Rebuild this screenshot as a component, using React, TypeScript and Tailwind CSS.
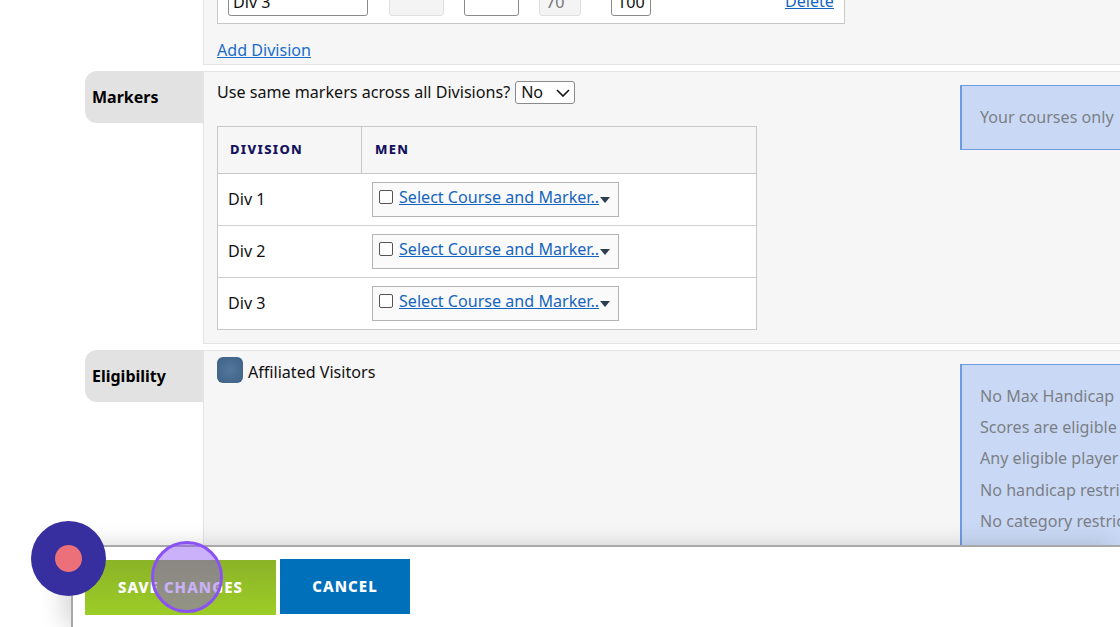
import React from 'react';

const divisions = ['Div 1', 'Div 2', 'Div 3'];
const eligibilityNotes = [
  'No Max Handicap',
  'Scores are eligible',
  'Any eligible player',
  'No handicap restrictions',
  'No category restrictions',
];

const SectionLabel: React.FC<{ title: string }> = ({ title }) => (
  <div className="w-[118px] h-[52px] shrink-0 bg-[#e2e2e2] rounded-l-xl pl-[7px] flex items-center text-[16px] font-bold text-black">
    {title}
  </div>
);

const MarkerPicker: React.FC = () => (
  <div className="w-[247px] h-[35px] border border-[#b4b4b4] bg-[#fafafa] flex items-start pl-[6px] pt-[4px]">
    <span className="w-[14px] h-[14px] mt-[3px] border border-[#555] rounded-[2px] bg-white shrink-0" />
    <a href="#" className="ml-[6px] text-[16.1px] leading-[20px] text-[#1565c0] underline whitespace-nowrap">
      Select Course and Marker..
    </a>
    <span className="mt-[10px] ml-[1px] w-0 h-0 border-x-[5px] border-x-transparent border-t-[6px] border-t-[#2c3e50]" />
  </div>
);

const App: React.FC = () => {
  return (
    <div className="relative w-[1120px] h-[627px] overflow-hidden bg-white font-['Noto_Sans',sans-serif] text-[16.1px] text-[#111]">
      <div className="-mt-[40px] pl-[85px]">
        {/* divisions */}
        <div className="ml-[118px] h-[105px] bg-[#f6f6f6] border-l border-b border-[#e4e4e4] pl-[13px]">
          <div className="w-[628px] h-[64px] bg-white border border-t-0 border-[#c8c8c8] flex items-start pl-[10px] pt-[28px]">
            <div className="w-[140px] h-[28px] border border-[#8a8a8a] rounded-[3px] bg-white pl-[4px] leading-[27px]">Div 3</div>
            <div className="ml-[21px] w-[55px] h-[28px] border border-[#e0e0e0] rounded-[3px] bg-[#f4f4f4]" />
            <div className="ml-[20px] w-[55px] h-[28px] border border-[#8a8a8a] rounded-[3px] bg-white" />
            <div className="ml-[20px] w-[42px] h-[28px] border border-[#e0e0e0] rounded-[3px] bg-[#f4f4f4] pl-[6px] leading-[27px] text-[#777]">70</div>
            <div className="ml-[30px] w-[40px] h-[28px] border border-[#8a8a8a] rounded-[3px] bg-white pl-[5px] leading-[27px]">100</div>
            <a href="#" className="ml-[134px] leading-[27px] text-[#1565c0] underline">Delete</a>
          </div>
          <a href="#" className="block mt-[14px] leading-[24px] text-[#1a6ccb] underline w-fit">Add Division</a>
        </div>

        {/* markers */}
        <div className="flex mt-[6px]">
          <SectionLabel title="Markers" />
          <div className="flex-1 h-[273px] bg-[#f6f6f6] border-l border-t border-b border-[#e4e4e4] pl-[13px] flex justify-between">
            <div className="w-[540px]">
              <div className="flex items-center mt-[9px] h-[23px] whitespace-nowrap">
                <span>Use same markers across all Divisions?</span>
                <span className="ml-[5px] w-[60px] h-[23px] border border-[#8a8a8a] rounded-[3px] bg-white pl-[5px] flex items-center justify-between pr-[4px]">
                  No
                  <svg width="14" height="8" viewBox="0 0 14 8" fill="none" stroke="#111" strokeWidth="1.6">
                    <path d="M1 1l6 6 6-6" />
                  </svg>
                </span>
              </div>
              <div className="mt-[22px] border border-[#c8c8c8] bg-white w-[540px]">
                <div className="flex h-[47px] bg-[#f6f6f6] border-b border-[#c8c8c8] text-[13px] font-extrabold tracking-[0.1em] text-[#14125e]">
                  <div className="w-[144px] border-r border-[#c8c8c8] pl-[12px] flex items-center">DIVISION</div>
                  <div className="pl-[13px] flex items-center">MEN</div>
                </div>
                {divisions.map((name, i) => (
                  <div key={name} className={`flex ${i < 2 ? 'h-[52px] border-b border-[#d0d0d0]' : 'h-[51px]'}`}>
                    <div className="w-[144px] pl-[10px] pt-[13px] leading-[24px]">{name}</div>
                    <div className="pl-[10px] pt-[8px]">
                      <MarkerPicker />
                    </div>
                  </div>
                ))}
              </div>
            </div>
            <div className="w-[160px] h-[65px] mt-[13px] bg-[#c9d9f5] border border-l-2 border-r-0 border-[#6f9be0] pl-[18px] pt-[19px] leading-[24px] text-[#7b7f85] whitespace-nowrap overflow-hidden">
              Your courses only
            </div>
          </div>
        </div>

        {/* eligibility */}
        <div className="flex mt-[6px]">
          <SectionLabel title="Eligibility" />
          <div className="flex-1 h-[300px] bg-[#f6f6f6] border-l border-t border-[#e4e4e4] pl-[13px] flex justify-between">
            <div className="flex items-start mt-[6px]">
              <span className="w-[26px] h-[26px] rounded-[6px] bg-[radial-gradient(circle,#54789c_0%,#3c5f85_100%)]" />
              <span className="ml-[5px] leading-[30px]">Affiliated Visitors</span>
            </div>
            <div className="w-[160px] h-[260px] mt-[13px] bg-[#c9d9f5] border border-l-2 border-r-0 border-[#6f9be0] pl-[18px] pt-[16px] leading-[31.2px] text-[#7b7f85] whitespace-nowrap overflow-hidden">
              {eligibilityNotes.map((note) => (
                <div key={note}>{note}</div>
              ))}
            </div>
          </div>
        </div>
      </div>

      {/* sticky save bar */}
      <div className="absolute left-[71px] right-0 top-[545px] bottom-0 bg-white border-l-2 border-t-2 border-[#a8a8a8] shadow-[-10px_-2px_20px_rgba(0,0,0,0.14)] flex items-start pl-[12px] pt-[12px] gap-[4px]">
        <button className="w-[191px] h-[55px] mt-[1px] bg-gradient-to-b from-[#8bb327] to-[#9ccd27] text-white text-[15px] font-extrabold tracking-[0.07em]">
          SAVE CHANGES
        </button>
        <button className="w-[130px] h-[55px] bg-[#0070bb] text-white text-[15px] font-extrabold tracking-[0.07em]">
          CANCEL
        </button>
      </div>

      {/* recorder dot */}
      <div className="absolute left-[31px] top-[521px] w-[75px] h-[75px] rounded-full bg-[#372ea0] flex items-center justify-center">
        <span className="w-[27px] h-[27px] rounded-full bg-[#ec7079]" />
      </div>

      {/* click highlight */}
      <div className="absolute left-[151px] top-[541px] w-[72px] h-[72px] rounded-full border-[3px] border-[#8a52f5] bg-[#8a52f5]/45" />
    </div>
  );
};

export default App;
